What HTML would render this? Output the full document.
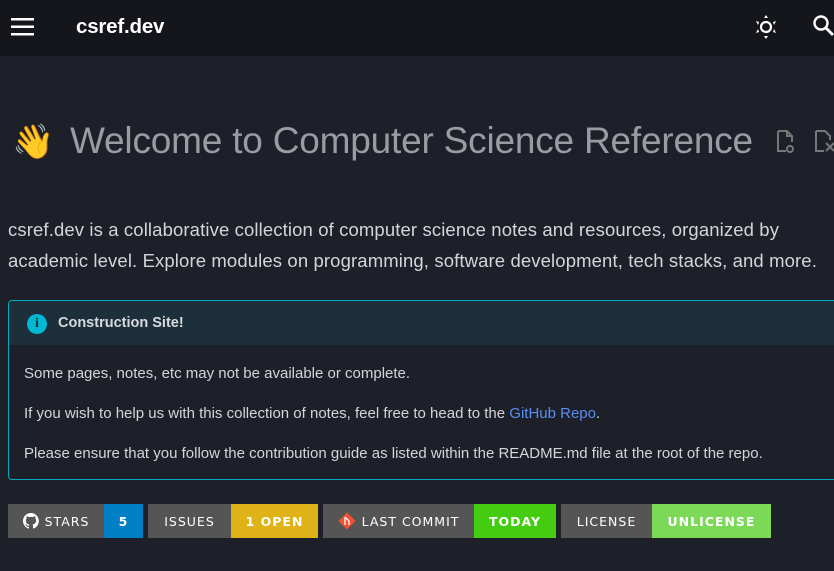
<!DOCTYPE html>
<html><head><meta charset="utf-8"><style>
*{margin:0;padding:0;box-sizing:border-box}
body{width:834px;height:571px;overflow:hidden;background:#1e2029;font-family:"Liberation Sans",sans-serif;position:relative}
.hdr{position:absolute;left:0;top:0;width:834px;height:56px;background:#15161b}
.title{position:absolute;left:76px;top:15px;color:#fff;font-weight:bold;font-size:20.5px;letter-spacing:-0.2px}
h1{position:absolute;left:70px;top:120px;font-weight:300;font-size:37px;color:#9a9ba3;white-space:nowrap;letter-spacing:-0.2px}
.p{position:absolute;left:8px;color:#d4d5da;font-size:18.5px;line-height:31px;width:830px;letter-spacing:0.12px}
.adm{position:absolute;left:8px;top:300px;width:840px;height:180px;border:1px solid #00a9c4;border-radius:4px;overflow:hidden}
.admh{height:44px;background:#1c2f3b;color:#d8dade;font-weight:bold;font-size:14.5px;padding:14px 0 0 49px}
.ic{position:absolute;left:18px;top:13px;width:20px;height:20px;border-radius:50%;background:#00b8d4;color:#1c2f3b;font:bold 14px "Liberation Serif",serif;text-align:center;line-height:20px}
.admp{position:absolute;left:15px;color:#d4d5da;font-size:15px;white-space:nowrap}
.admp a{color:#5a8ef0;text-decoration:none}
.b{position:absolute;top:504px;height:34px;display:flex;font-family:"DejaVu Sans",sans-serif;font-size:12.5px;color:#fff;letter-spacing:1px}
.b span{display:flex;align-items:center;justify-content:center;height:34px}
.l{background:#555}
.r{font-weight:bold}
</style></head><body>
<div class="hdr">
<svg style="position:absolute;left:11px;top:17px" width="24" height="20"><rect y="1" width="23" height="2.5" fill="#fff"/><rect y="8.5" width="23" height="2.5" fill="#fff"/><rect y="16" width="23" height="2.5" fill="#fff"/></svg>
<div class="title">csref.dev</div>
<svg style="position:absolute;left:754px;top:14px" width="24" height="26" viewBox="0 0 24 26"><circle cx="12" cy="13" r="5" fill="none" stroke="#fff" stroke-width="2.2"/><path d="M12 1l2 3h-4zM12 25l2-3h-4zM2 7l3 1-1 3zM22 7l-3 1 1 3zM2 19l3-1-1-3zM22 19l-3-1 1-3z" fill="#fff"/></svg>
<svg style="position:absolute;left:812px;top:14px" width="22" height="24"><circle cx="9" cy="9" r="6.5" fill="none" stroke="#fff" stroke-width="2.4"/><path d="M14 14l7 7" stroke="#fff" stroke-width="2.8"/></svg>
</div>
<div style="position:absolute;left:12px;top:122px;font-size:34px;line-height:40px;font-family:'Noto Color Emoji',sans-serif">👋</div>
<h1>Welcome to Computer Science Reference</h1>
<svg style="position:absolute;left:776px;top:129px" width="60" height="26"><path d="M2 2h9l5 5v6M2 2v20h8M11 2v5h5" fill="none" stroke="#777" stroke-width="2"/><circle cx="14" cy="20" r="3" fill="none" stroke="#777" stroke-width="2"/><path d="M40 2h9l5 5v4M40 2v20h8" fill="none" stroke="#777" stroke-width="2"/><path d="M50 14l8 8M58 14l-8 8" stroke="#777" stroke-width="2"/></svg>
<div class="p" style="top:214px;white-space:nowrap">csref.dev is a collaborative collection of computer science notes and resources, organized by<br>academic level. Explore modules on programming, software development, tech stacks, and more.</div>
<div class="adm"><div class="admh">Construction Site!</div><div class="ic">i</div>
<div class="admp" style="top:64px">Some pages, notes, etc may not be available or complete.</div>
<div class="admp" style="top:104px">If you wish to help us with this collection of notes, feel free to head to the <a>GitHub Repo</a>.</div>
<div class="admp" style="top:144px">Please ensure that you follow the contribution guide as listed within the README.md file at the root of the repo.</div>
</div>
<div class="b" style="left:8px"><span class="l" style="width:96px"><svg width="16" height="16" viewBox="0 0 16 16" style="margin-right:6px"><path d="M8 0a8 8 0 00-2.5 15.6c.4 0 .5-.2.5-.4v-1.4c-2.200.5-2.7-1-2.7-1-.4-.9-.9-1.2-.9-1.2-.7-.5.1-.5.1-.5.8.1 1.2.8 1.2.8.7 1.2 1.9.9 2.3.7.1-.5.3-.9.5-1.1-1.8-.2-3.6-.9-3.6-4 0-.9.3-1.6.8-2.1-.1-.2-.4-1 .1-2.1 0 0 .7-.2 2.2.8a7.500 7.500 0 014 0c1.5-1 2.2-.8 2.2-.8.4 1.1.2 1.9.1 2.1.5.6.8 1.3.8 2.1 0 3.1-1.9 3.7-3.6 3.9.3.3.5.8.5 1.5v2.2c0 .2.1.5.6.4A8 8 0 008 0z" fill="#fff"/></svg>STARS</span><span class="r" style="width:39px;background:#007ec6">5</span></div>
<div class="b" style="left:148px"><span class="l" style="width:83px">ISSUES</span><span class="r" style="width:87px;background:#dfb317">1 OPEN</span></div>
<div class="b" style="left:323px"><span class="l" style="width:151px"><svg width="18" height="18" viewBox="0 0 18 18" style="margin-right:6px"><rect x="3" y="3" width="12" height="12" transform="rotate(45 9 9)" fill="#f05133"/><path d="M7 5l4 4v4M7 5v8" stroke="#fff" stroke-width="1.3" fill="none"/></svg>LAST COMMIT</span><span class="r" style="width:82px;background:#44cc11">TODAY</span></div>
<div class="b" style="left:561px"><span class="l" style="width:91px">LICENSE</span><span class="r" style="width:119px;background:#7cd958">UNLICENSE</span></div>
</body></html>
